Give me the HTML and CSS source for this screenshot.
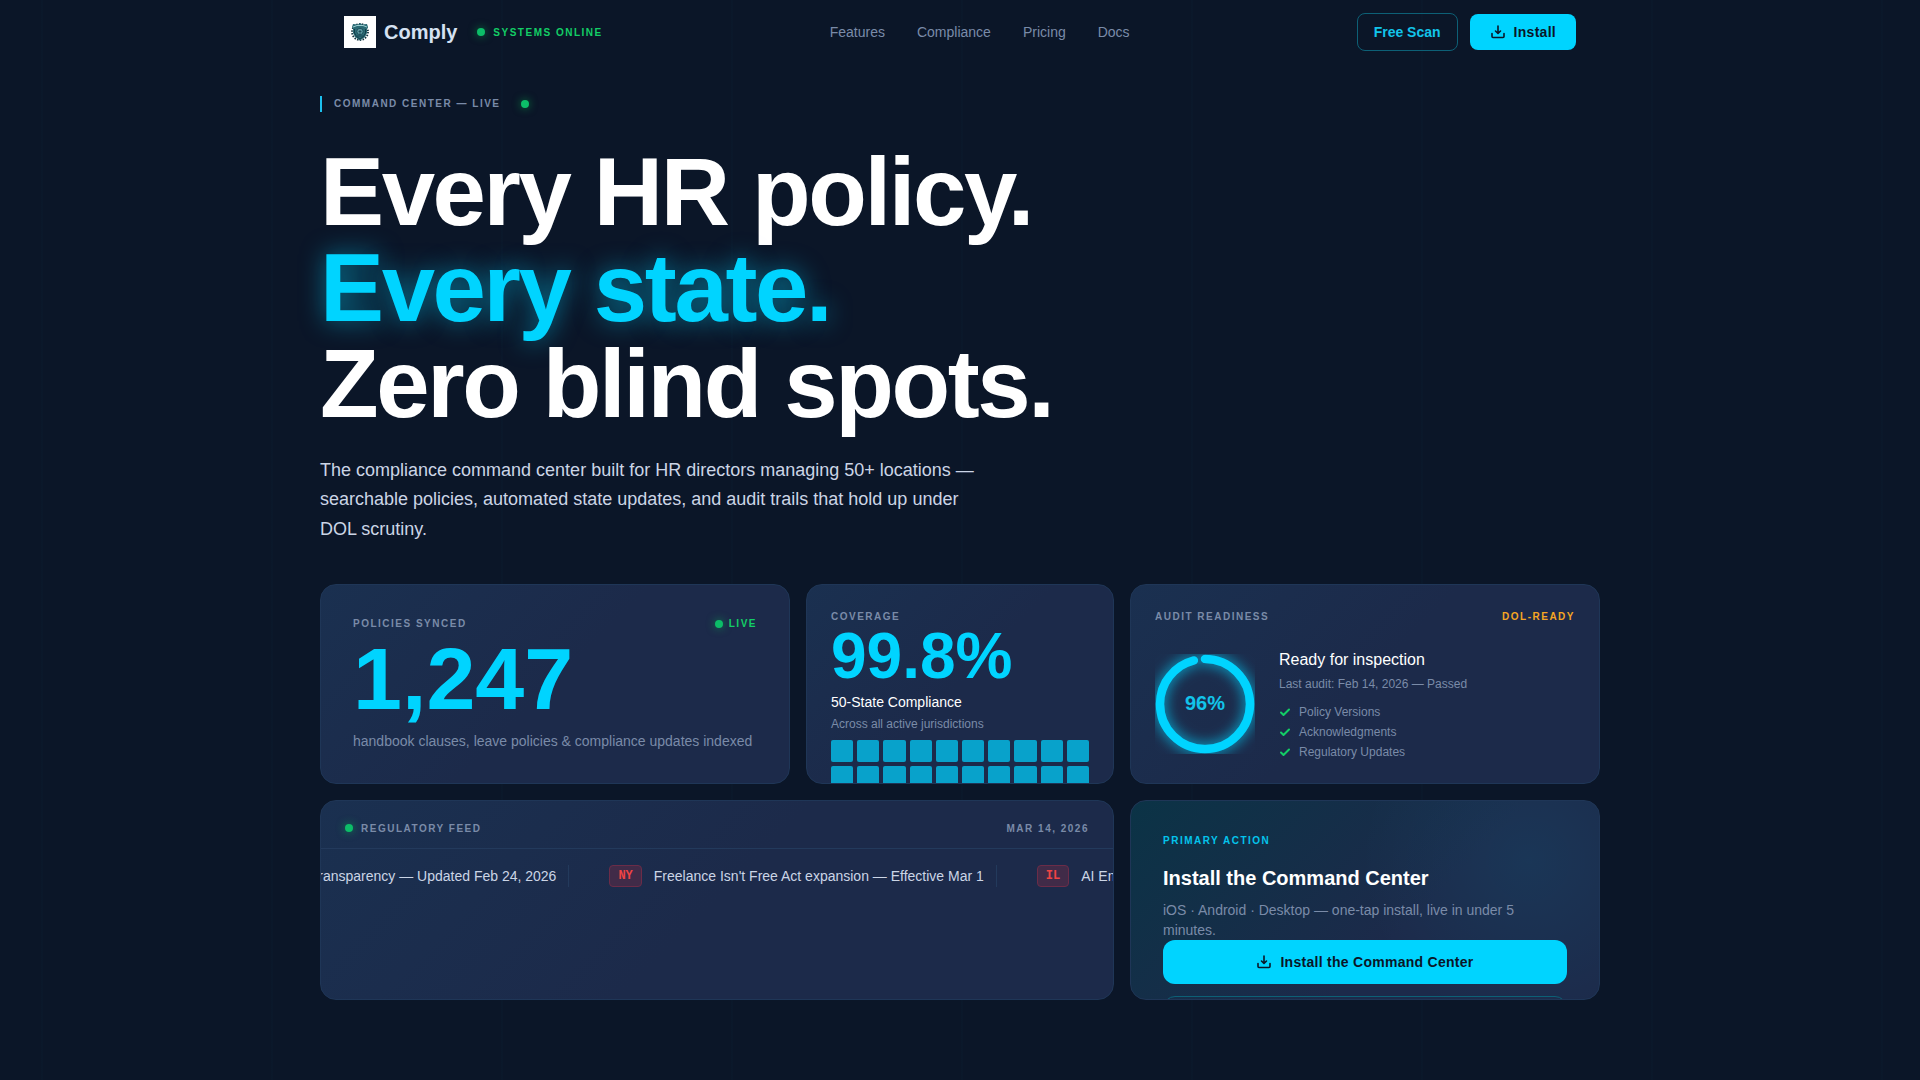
FILE: index.html
```html
<!DOCTYPE html>
<html lang="en">
<head>
    <meta charset="UTF-8">
    <meta name="viewport" content="width=device-width, initial-scale=1.0">
    <title>Comply</title>
    <link rel="stylesheet" href="styles.css">
</head>
<body>
    <header class="header">
        <div class="brand">
            <a class="logo" href="#">
                <svg class="logo-mark" width="32" height="32" viewBox="0 0 32 32" aria-hidden="true">
                    <rect width="32" height="32" fill="#ffffff"/>
                    <!-- gear teeth -->
                    <circle cx="16" cy="16" r="8" fill="none" stroke="#12303c" stroke-width="1.800" stroke-dasharray="1.500 1.300"/>
                    <!-- shield -->
                    <path d="M16 7l2 1.500 5-.5 1 3-1 2v4l-2 4-5 3.500-5-3.500-2-4v-4l-1-2 1-3 5 .5z" fill="#2a6a74"/>
                    <path d="M9 11l4-1.500h6l4 1.500" fill="none" stroke="#9ccfd2" stroke-width="1"/>
                    <path d="M10.500 13v4l2 3.500L16 23l3.500-2.500 2-3.500v-4" fill="none" stroke="#143d49" stroke-width="1"/>
                    <circle cx="16" cy="15.500" r="3.200" fill="#5b9ba2" stroke="#17404e" stroke-width=".8"/>
                    <path d="M14.500 15.500h3M16 14v4M13 20h6" fill="none" stroke="#17404e" stroke-width=".8"/>
                </svg>
                <span>Comply</span>
            </a>
            <span class="status"><i class="dot"></i>Systems Online</span>
        </div>
        <nav class="nav">
            <a href="#">Features</a>
            <a href="#">Compliance</a>
            <a href="#">Pricing</a>
            <a href="#">Docs</a>
        </nav>
        <div class="actions">
            <button class="btn btn-outline" type="button">Free Scan</button>
            <button class="btn btn-primary" type="button">
                <svg class="icon" width="16" height="16" viewBox="0 0 16 16" aria-hidden="true">
                    <path d="M8 2v7M5.500 7L8 9.500 10.500 7M2 9.500v3a1 1 0 0 0 1 1h10a1 1 0 0 0 1-1v-3"/>
                </svg>
                Install
            </button>
        </div>
    </header>

    <main class="container">
        <div class="eyebrow">
            <span class="label eyebrow-label">Command Center — Live</span>
            <i class="dot"></i>
        </div>
        <h1 class="title">
            Every HR policy.<br>
            <span class="glow">Every state.</span><br>
            Zero blind spots.
        </h1>
        <p class="lead">The compliance command center built for HR directors managing 50+ locations — searchable policies, automated state updates, and audit trails that hold up under DOL scrutiny.</p>

        <section class="bento">
            <article class="card card-policies">
                <div class="card-top">
                    <span class="label">Policies Synced</span>
                    <span class="status status-small"><i class="dot"></i>Live</span>
                </div>
                <div class="number number-big">1,247</div>
                <p class="text">handbook clauses, leave policies &amp; compliance updates indexed</p>
            </article>

            <article class="card card-coverage">
                <span class="label">Coverage</span>
                <div class="number">99.8%</div>
                <h2 class="sub">50-State Compliance</h2>
                <p class="note">Across all active jurisdictions</p>
                <div class="states">
                    <i></i><i></i><i></i><i></i><i></i><i></i><i></i><i></i><i></i><i></i>
                    <i></i><i></i><i></i><i></i><i></i><i></i><i></i><i></i><i></i><i></i>
                </div>
            </article>

            <article class="card card-audit">
                <div class="card-top">
                    <span class="label">Audit Readiness</span>
                    <span class="label label-amber">DOL-Ready</span>
                </div>
                <div class="audit">
                    <div class="ring">
                        <svg class="ring-svg" width="100" height="100" viewBox="0 0 120 120" aria-hidden="true">
                            <circle class="ring-track" cx="60" cy="60" r="54"/>
                            <circle class="ring-value" cx="60" cy="60" r="54" pathLength="100"/>
                        </svg>
                        <span class="ring-text">96%</span>
                    </div>
                    <div>
                        <h2 class="audit-title">Ready for inspection</h2>
                        <p class="note">Last audit: Feb 14, 2026 — Passed</p>
                        <ul class="checks">
                            <li><svg class="check" width="12" height="12" viewBox="0 0 12 12" aria-hidden="true"><path d="M2 6.500L4.500 9 10 3.500"/></svg>Policy Versions</li>
                            <li><svg class="check" width="12" height="12" viewBox="0 0 12 12" aria-hidden="true"><path d="M2 6.500L4.500 9 10 3.500"/></svg>Acknowledgments</li>
                            <li><svg class="check" width="12" height="12" viewBox="0 0 12 12" aria-hidden="true"><path d="M2 6.500L4.500 9 10 3.500"/></svg>Regulatory Updates</li>
                        </ul>
                    </div>
                </div>
            </article>

            <article class="card card-feed">
                <div class="feed-top">
                    <span class="label feed-label"><i class="dot"></i>Regulatory Feed</span>
                    <span class="label">Mar 14, 2026</span>
                </div>
                <div class="ticker">
                    <div class="feed-item"><span class="tag">CA</span><span>SB 1162 Pay Transparency — Updated Feb 24, 2026</span></div>
                    <div class="feed-item"><span class="tag">NY</span><span>Freelance Isn't Free Act expansion — Effective Mar 1</span></div>
                    <div class="feed-item"><span class="tag">IL</span><span>AI Employment Act</span></div>
                </div>
            </article>

            <article class="card card-install">
                <span class="label label-cyan">Primary Action</span>
                <h2 class="install-title">Install the Command Center</h2>
                <p class="text">iOS · Android · Desktop — one-tap install, live in under 5 minutes.</p>
                <button class="btn btn-primary btn-wide" type="button">
                    <svg class="icon" width="16" height="16" viewBox="0 0 16 16" aria-hidden="true">
                        <path d="M8 2v7M5.500 7L8 9.500 10.500 7M2 9.500v3a1 1 0 0 0 1 1h10a1 1 0 0 0 1-1v-3"/>
                    </svg>
                    Install the Command Center
                </button>
                <button class="btn btn-outline btn-wide" type="button">Free Scan</button>
            </article>
        </section>
    </main>
</body>
</html>
```

FILE: styles.css
```css
*{
    padding: 0;
    margin: 0;
    box-sizing: border-box;
}
body{
    min-height: 100vh;
    background: #0b1628 repeating-linear-gradient(90deg, transparent 0 41px, rgba(0, 212, 255, 0.012) 41px 43px, transparent 43px 230px);
    color: #ffffff;
    font-family: "Liberation Sans", Arial, sans-serif;
    overflow: hidden;
}
a{
    color: inherit;
    text-decoration: none;
}
.header{
    display: flex;
    align-items: center;
    justify-content: space-between;
    max-width: 1280px;
    height: 64px;
    margin: 0 auto;
    padding: 0 24px;
}
.brand{
    display: flex;
    align-items: center;
    gap: 20px;
}
.logo{
    display: flex;
    align-items: center;
    gap: 8px;
    color: #d5e1f2;
    font-size: 20px;
    font-weight: bold;
}
.status{
    display: flex;
    align-items: center;
    gap: 8px;
    color: #13ce66;
    font-size: 10px;
    font-weight: bold;
    line-height: 15px;
    letter-spacing: 0.15em;
    text-transform: uppercase;
}
.status-small{
    gap: 6px;
}
.dot{
    width: 8px;
    height: 8px;
    border-radius: 50%;
    background: #0cbd68;
    box-shadow: 0 0 8px rgba(0, 200, 83, 0.6);
}
.nav{
    display: flex;
    gap: 32px;
    color: #7a8ba8;
    font-size: 14px;
}
.actions{
    display: flex;
    align-items: center;
    gap: 12px;
}
.btn{
    display: flex;
    align-items: center;
    justify-content: center;
    border-radius: 8px;
    font-family: inherit;
    font-size: 14px;
    font-weight: bold;
}
.btn-outline{
    height: 38px;
    padding: 0 16px;
    border: 1px solid #0d6076;
    background: transparent;
    color: #12c4ea;
}
.btn-primary{
    gap: 8px;
    height: 36px;
    padding: 0 20px;
    border: none;
    background: #00d4ff;
    color: #0a1628;
    letter-spacing: 0.02em;
}
.btn-wide{
    flex-shrink: 0;
    width: 100%;
    height: 44px;
    border-radius: 12px;
}
.icon{
    fill: none;
    stroke: currentColor;
    stroke-width: 1.6;
    stroke-linecap: round;
    stroke-linejoin: round;
}
.container{
    max-width: 1280px;
    margin: 0 auto;
    padding-top: 32px;
}
.label{
    color: #7a8ba8;
    font-size: 10px;
    font-weight: bold;
    line-height: 15px;
    letter-spacing: 0.15em;
    text-transform: uppercase;
}
.label-amber{
    color: #f5a623;
}
.label-cyan{
    color: #04c4ec;
}
.eyebrow{
    display: flex;
    align-items: center;
    gap: 20px;
    margin-bottom: 32px;
}
.eyebrow-label{
    padding-left: 12px;
    border-left: 2px solid #1cc0ee;
    line-height: 16px;
}
.title{
    font-size: 96px;
    line-height: 96px;
    letter-spacing: -0.025em;
}
.glow{
    color: #00d4ff;
    text-shadow: 0 0 24px rgba(0, 212, 255, 0.5);
}
.lead{
    max-width: 672px;
    margin: 24px 0 40px;
    color: #cbd5e6;
    font-size: 18px;
    line-height: 1.625;
}
.bento{
    display: grid;
    grid-template-columns: 1fr 308px 1fr;
    grid-auto-rows: 200px;
    gap: 16px;
}
.card{
    display: flex;
    flex-direction: column;
    min-width: 0;
    padding: 24px;
    border: 1px solid #1f3657;
    border-radius: 16px;
    background: linear-gradient(135deg, #1a3050 0%, #1c2a4a 50%, #1c2a4a 100%);
    overflow: hidden;
}
.card-policies{
    justify-content: center;
    padding: 24px 32px;
}
.card-policies .card-top{
    margin-bottom: 4px;
}
.card-policies .text{
    margin-top: 8px;
}
.card-top{
    display: flex;
    justify-content: space-between;
}
.number{
    color: #00d4ff;
    font-size: 64px;
    font-weight: bold;
    line-height: 64px;
}
.number-big{
    font-size: 88px;
    line-height: 88px;
}
.text{
    color: #7a8ba8;
    font-size: 14px;
    line-height: 20px;
}
.note{
    color: #7a8ba8;
    font-size: 12px;
    line-height: 16px;
}
.sub{
    margin: 4px 0;
    font-size: 14px;
    font-weight: normal;
    line-height: 20px;
}
.states{
    display: grid;
    grid-template-columns: repeat(10, 1fr);
    gap: 4px;
    margin-top: 8px;
}
.states i{
    aspect-ratio: 1;
    border-radius: 2px;
    background: #08a2cb;
}
.audit{
    display: flex;
    flex: 1;
    align-items: center;
    gap: 24px;
    padding-top: 24px;
}
.ring{
    display: grid;
    place-items: center;
}
.ring-svg,
.ring-text{
    grid-area: 1 / 1;
}
.ring-svg{
    transform: rotate(-90deg);
}
.ring-track,
.ring-value{
    fill: none;
    stroke: #1f3858;
    stroke-width: 10;
}
.ring-value{
    stroke: #00d4ff;
    stroke-linecap: round;
    stroke-dasharray: 96 100;
    filter: drop-shadow(0 0 8px rgba(0, 212, 255, 0.9));
}
.ring-text{
    color: #12c4ea;
    font-size: 20px;
    font-weight: bold;
}
.audit-title{
    margin-bottom: 4px;
    font-size: 16px;
    font-weight: normal;
    line-height: 24px;
}
.checks{
    display: grid;
    gap: 4px;
    margin-top: 12px;
    color: #7a8ba8;
    font-size: 12px;
    line-height: 16px;
    list-style: none;
}
.checks li{
    display: flex;
    align-items: center;
    gap: 8px;
}
.check{
    fill: none;
    stroke: #13ce66;
    stroke-width: 2;
    stroke-linecap: round;
    stroke-linejoin: round;
}
.card-feed{
    grid-column: span 2;
    padding: 0;
}
.feed-top{
    display: flex;
    justify-content: space-between;
    padding: 20px 24px 12px;
    border-bottom: 1px solid #233a5c;
}
.feed-label{
    display: flex;
    align-items: center;
    gap: 8px;
}
.ticker{
    display: flex;
    justify-content: center;
    padding-top: 16px;
}
.feed-item{
    display: flex;
    flex-shrink: 0;
    align-items: center;
    gap: 12px;
    margin-right: 40px;
    padding-right: 12px;
    border-right: 1px solid #233a5c;
    color: #cbd5e6;
    font-size: 14px;
    line-height: 16px;
}
.tag{
    padding: 2px 8px;
    border: 1px solid #6b2c48;
    border-radius: 4px;
    background: #412b48;
    color: #f04444;
    font-family: "Liberation Mono", monospace;
    font-size: 12px;
    font-weight: bold;
}
.card-install{
    padding: 32px;
    background:
        radial-gradient(circle at 85% 30%, rgba(0, 212, 255, 0.07), transparent 40%),
        linear-gradient(135deg, #0b3346 0%, #1c2a4a 60%, #1c2a4a 100%);
}
.install-title{
    margin: 16px 0 8px;
    font-size: 20px;
    line-height: 28px;
}
.card-install .btn-outline{
    margin-top: 12px;
}
```
